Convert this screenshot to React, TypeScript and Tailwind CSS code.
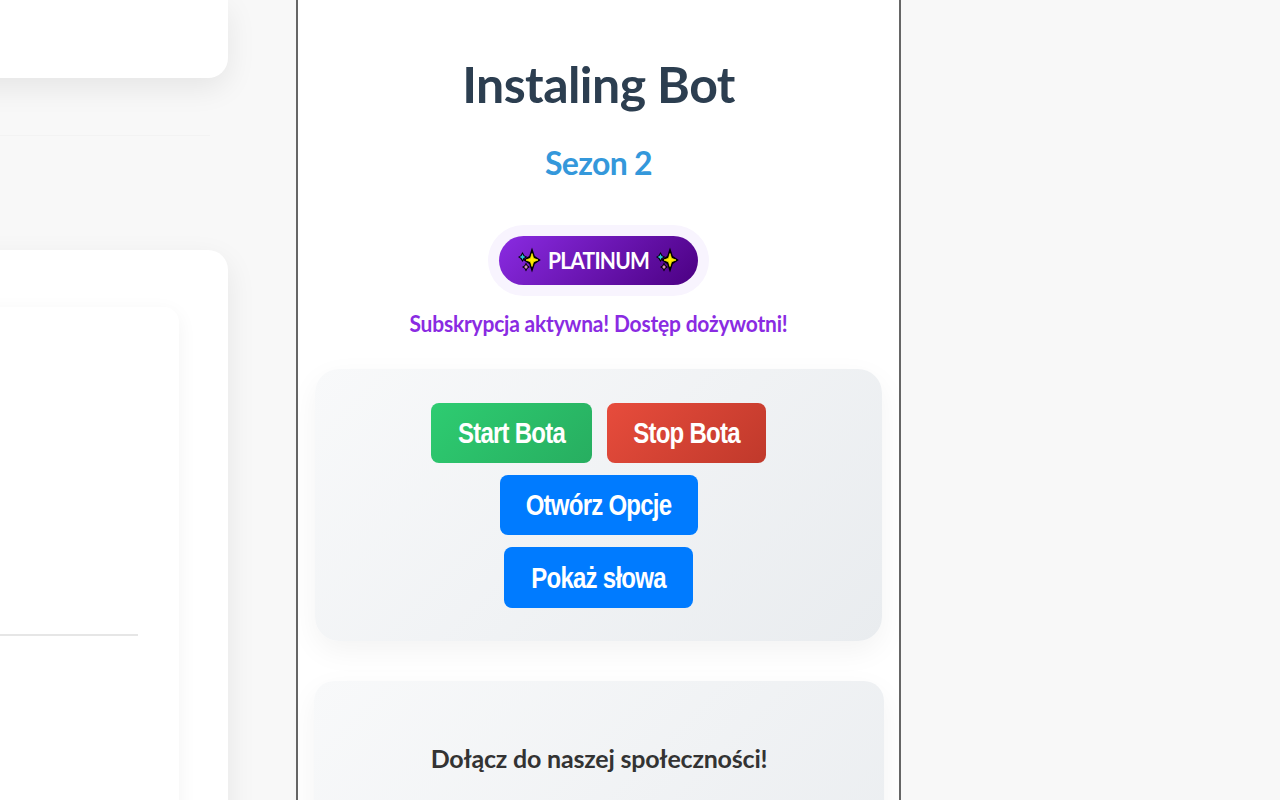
const btn = "flex items-center justify-center rounded-lg text-[24px] font-bold tracking-[-0.75px] text-white";
const stretched = "inline-block scale-y-[1.2]";

function Sparkles() {
  return (
    <svg width="23" height="26" viewBox="0 0 23 26" className="shrink-0">
      <path d="M14 0.5 L16.8 9 L22.8 13 L16.8 17 L14 25.5 L11.2 17 L5.2 13 L11.2 9 Z" fill="#000" />
      <path d="M14 6.5 L15.5 11.3 L20 13 L15.5 14.8 L14 19.5 L12.5 14.8 L8 13 L12.5 11.3 Z" fill="#ffee00" stroke="#ffee00" strokeWidth="0.8" />
      <path d="M4.5 5 L6.4 8.4 L9.5 10 L6.4 11.7 L4.5 15 L2.6 11.7 L0 10 L2.6 8.4 Z" fill="#000" />
      <path d="M4.5 7 L5.5 9.1 L7.6 10 L5.5 10.9 L4.5 13 L3.5 10.9 L1.4 10 L3.5 9.1 Z" fill="#2bc4d8" />
      <path d="M8 15.5 L9.6 18.6 L12 20 L9.6 21.4 L8 24.5 L6.4 21.4 L4 20 L6.4 18.6 Z" fill="#000" />
      <path d="M8 17.6 L8.8 19.3 L10.2 20 L8.8 20.7 L8 22.4 L7.2 20.7 L5.8 20 L7.2 19.3 Z" fill="#e59ac8" />
    </svg>
  );
}

export default function App() {
  return (
    <div className="flex h-[800px] w-[1280px] overflow-hidden bg-[#f8f8f8]">
      <div className="flex h-full w-[296px] shrink-0 flex-col items-end">
        <div className="mr-[68px] h-[78px] w-[300px] shrink-0 rounded-b-[20px] bg-white shadow-[0_10px_30px_rgba(0,0,0,0.08)]" />
        <div className="mt-[57px] mr-[86px] h-px w-[300px] shrink-0 bg-[#f3f3f3]" />
        <div className="mt-[114px] mr-[68px] h-[600px] w-[300px] shrink-0 rounded-[20px] bg-white pt-[57px] pr-[49px] shadow-[0_10px_30px_rgba(0,0,0,0.08)]">
          <div className="h-[560px] rounded-[15px] bg-white pt-[327px] pr-[41px] shadow-[0_5px_20px_rgba(0,0,0,0.05)]">
            <div className="h-0.5 bg-[#e6e6e6]" />
          </div>
        </div>
      </div>

      <div className="h-full w-[605px] shrink-0 border-x-2 border-[#666666] bg-white px-[17px] text-center font-['Lato','Open_Sans',sans-serif]">
        <h1 className="mt-[54px] text-[50px] leading-[60px] font-bold tracking-[-0.55px] whitespace-nowrap text-[#2c3e50]">Instaling Bot</h1>
        <h2 className="mt-[30px] text-[32px] leading-[38px] font-bold tracking-[-0.7px] text-[#3498db]">Sezon 2</h2>
        <div className="mt-[54px] flex justify-center">
          <div className="flex h-[49px] w-[199px] items-center justify-center gap-[7px] rounded-full bg-[linear-gradient(135deg,#8a2be2,#4b0082)] pb-0.5 text-[21px] font-bold tracking-[-0.8px] text-white shadow-[0_0_0_11px_#f8f4fe]">
            <Sparkles />
            <span className="inline-block scale-y-[1.12]">PLATINUM</span>
            <Sparkles />
          </div>
        </div>
        <p className="mt-[23px] scale-y-[1.1] text-[21px] leading-[30px] font-bold tracking-[-0.2px] whitespace-nowrap text-[#8a2be2]">Subskrypcja aktywna! Dostęp dożywotni!</p>
        <div className="mt-[31px] flex h-[272px] w-[567px] flex-col items-center gap-3 rounded-[24px] bg-[linear-gradient(135deg,#f8f9fa,#e9ecef)] pt-[34px] font-['Liberation_Sans',sans-serif] shadow-[0_10px_30px_rgba(0,0,0,0.05)]">
          <div className="flex gap-[15px]">
            <button className={`${btn} h-[60px] w-[161px] bg-[linear-gradient(135deg,#2ecc71,#27ae60)]`}><span className={stretched}>Start Bota</span></button>
            <button className={`${btn} h-[60px] w-[159px] bg-[linear-gradient(135deg,#e74c3c,#c0392b)]`}><span className={stretched}>Stop Bota</span></button>
          </div>
          <button className={`${btn} h-[60px] w-[198px] bg-[#007bff]`}><span className={stretched}>Otwórz Opcje</span></button>
          <button className={`${btn} h-[61px] w-[189px] bg-[#007bff]`}><span className={stretched}>Pokaż słowa</span></button>
        </div>
        <div className="-ml-px mt-[40px] h-[300px] w-[570px] rounded-[20px] bg-[linear-gradient(135deg,#f8f9fa,#e9ecef)] pt-[61px] shadow-[0_10px_30px_rgba(0,0,0,0.05)]">
          <h3 className="text-[25px] leading-[32px] font-bold tracking-[-0.2px] whitespace-nowrap text-[#333333]">Dołącz do naszej społeczności!</h3>
        </div>
      </div>

      <div className="h-full flex-1 bg-[#f8f8f8]" />
    </div>
  );
}
